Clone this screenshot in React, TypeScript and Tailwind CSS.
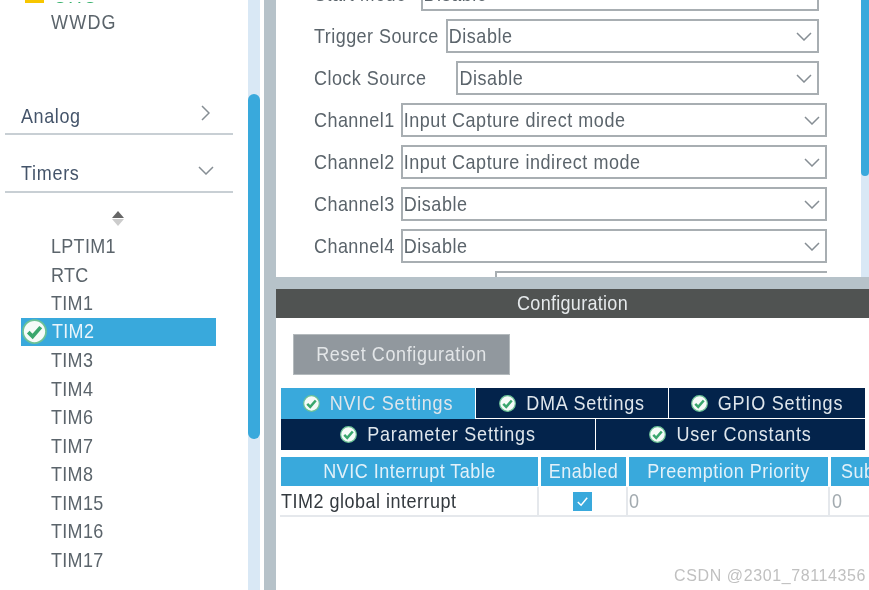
const timers = ["LPTIM1", "RTC", "TIM1", "TIM2", "TIM3", "TIM4", "TIM6", "TIM7", "TIM8", "TIM15", "TIM16", "TIM17"];

// the reference glyphs are a bit taller than Arial at this width
function T({ children }: { children: string }) {
    return <span className="inline-block scale-y-[1.1] whitespace-nowrap">{children}</span>;
}

function CheckDot({ className }: { className: string }) {
    return (
        <svg viewBox="0 0 20 20" className={className}>
            <circle cx="10" cy="10" r="9.2" fill="#f6fbf8" stroke="#6cc296" strokeWidth="1.4" />
            <path d="M5 10.5l3.5 3.5L15 6.5" fill="none" stroke="#3aa76d" strokeWidth="3" />
        </svg>
    );
}

function ArrowDown() {
    return (
        <svg viewBox="0 0 16 9" className="w-[16px] h-[9px]">
            <path d="M1 1l7 7 7-7" fill="none" stroke="#868e94" strokeWidth="1.5" />
        </svg>
    );
}

function ArrowRight() {
    return (
        <svg viewBox="0 0 9 16" className="w-[9px] h-[16px]">
            <path d="M1 1l7 7-7 7" fill="none" stroke="#868e94" strokeWidth="1.5" />
        </svg>
    );
}

function Field({ label, value, boxClass }: { label: string; value: string; boxClass: string }) {
    return (
        <div className="flex h-[34px] mb-2 items-center">
            <span className="tracking-[0.45px] text-[#5b646b]"><T>{label}</T></span>
            <div className={`${boxClass} h-[34px] border-2 border-[#a8aeb2] flex items-center justify-between pl-[1px] pr-[5px] text-[#5b646b] tracking-[0.55px]`}>
                <T>{value}</T>
                <ArrowDown />
            </div>
        </div>
    );
}

function Tab({ label, className }: { label: string; className: string }) {
    return (
        <div className={`flex items-center justify-center gap-[10px] text-[#dfe6ec] tracking-[0.8px] ${className}`}>
            <CheckDot className="w-[17px] h-[17px]" />
            <T>{label}</T>
        </div>
    );
}

export default function App() {
    return (
        <div className="flex w-[869px] h-[590px] overflow-hidden bg-white text-[18px] blur-[0.4px]" style={{ fontFamily: '"Liberation Sans", Arial, sans-serif' }}>
            <aside className="w-[248px] flex flex-col text-[#5b646b]">
                <div className="h-[3px] overflow-hidden flex items-end pl-[25px] gap-[10px]">
                    <div className="w-[19px] h-[3px] bg-[#f7c600] shrink-0" />
                    <span className="text-[#35b06a] tracking-[3px] leading-[18px] translate-y-[15px]">SYS</span>
                </div>
                <div className="pl-[51px] mt-[8px] h-[24px] leading-[22px] tracking-[1.2px]"><T>WWDG</T></div>

                <div className="mt-[64px] mx-[5px] w-[228px] h-[36px] border-b-2 border-[#c8cfd4] flex items-center justify-between pl-[16px] pr-[23px] text-[#44546a] tracking-[0.6px]">
                    <T>Analog</T>
                    <div className="-mt-[6px]"><ArrowRight /></div>
                </div>
                <div className="mt-[20px] mx-[5px] w-[228px] h-[38px] border-b-2 border-[#c8cfd4] flex items-center justify-between pl-[16px] pr-[19px] text-[#44546a] tracking-[0.7px]">
                    <T>Timers</T>
                    <div className="-mt-[6px]"><ArrowDown /></div>
                </div>

                <div className="flex flex-col items-center w-[236px] mt-[18px] h-[18px]">
                    <div className="w-0 h-0 border-x-[6px] border-x-transparent border-b-[7px] border-b-[#666]" />
                    <div className="mt-[1px] w-0 h-0 border-x-[6px] border-x-transparent border-t-[7px] border-t-[#ccc]" />
                </div>

                <ul className="mt-[3px] tracking-[0.3px]">
                    {timers.map((name) =>
                        name === "TIM2" ? (
                            <li key={name} className="ml-[21px] w-[195px] h-[28.55px] bg-[#39a9dc] flex items-center text-[#eaf5fb] pl-[1px]">
                                <CheckDot className="w-[25px] h-[25px]" />
                                <span className="ml-[5px]"><T>{name}</T></span>
                            </li>
                        ) : (
                            <li key={name} className="pl-[51px] h-[28.55px] leading-[28.55px]">
                                <T>{name}</T>
                            </li>
                        )
                    )}
                </ul>
            </aside>

            <div className="w-[12px] bg-[#d9e8f5] pt-[94px]">
                <div className="h-[345px] rounded-full bg-[#39a9dc]" />
            </div>
            <div className="w-[4px]" />
            <div className="w-[12px] bg-[#b6c2c9]" />

            <main className="flex-1 flex flex-col min-w-0">
                <section className="h-[277px] flex overflow-hidden">
                    <div className="flex-1 pl-[38px] -mt-[23px]">
                        <Field label="Start Mode" value="Disable" boxClass="ml-[14px] w-[398px]" />
                        <Field label="Trigger Source" value="Disable" boxClass="ml-[7px] w-[373px]" />
                        <Field label="Clock Source" value="Disable" boxClass="ml-[30px] w-[363px]" />
                        <Field label="Channel1" value="Input Capture direct mode" boxClass="ml-[6px] w-[426px]" />
                        <Field label="Channel2" value="Input Capture indirect mode" boxClass="ml-[6px] w-[426px]" />
                        <Field label="Channel3" value="Disable" boxClass="ml-[6px] w-[426px]" />
                        <Field label="Channel4" value="Disable" boxClass="ml-[6px] w-[426px]" />
                        <div className="ml-[181px] w-[332px] h-[34px] border-t-2 border-l-2 border-[#a8aeb2]" />
                    </div>
                    <div className="w-[8px] bg-[#d9e8f5]">
                        <div className="h-[176px] rounded-b-[4px] bg-[#39a9dc]" />
                    </div>
                </section>

                <div className="h-[12px] bg-[#b6c2c9]" />
                <div className="h-[29px] bg-[#505352] text-[#e6eaec] flex items-center justify-center tracking-[0.3px]"><T>Configuration</T></div>

                <div className="ml-[17px] mt-[16px] w-[217px] h-[41px] bg-[#91989e] border border-[#b4babd] text-[#e3e6e8] tracking-[0.6px] flex items-center justify-center">
                    <T>Reset Configuration</T>
                </div>

                <div className="ml-[5px] mt-[13px] w-[584px] flex items-start gap-[1px] h-[31px]">
                    <Tab label="NVIC Settings" className="w-[194px] h-[31px] bg-[#39a9dc]" />
                    <Tab label="DMA Settings" className="w-[192px] h-[30px] bg-[#03234b]" />
                    <Tab label="GPIO Settings" className="flex-1 h-[30px] bg-[#03234b]" />
                </div>
                <div className="ml-[5px] w-[584px] flex gap-[1px]">
                    <Tab label="Parameter Settings" className="w-[314px] h-[31px] bg-[#03234b]" />
                    <Tab label="User Constants" className="flex-1 h-[31px] bg-[#03234b]" />
                </div>

                <div className="ml-[5px] mt-[7px] flex gap-[3px] h-[29px] text-[#e3f1f9] tracking-[0.5px] whitespace-nowrap">
                    <div className="w-[257px] shrink-0 bg-[#39a9dc] flex items-center justify-center"><T>NVIC Interrupt Table</T></div>
                    <div className="w-[85px] shrink-0 bg-[#39a9dc] flex items-center justify-center"><T>Enabled</T></div>
                    <div className="w-[199px] shrink-0 bg-[#39a9dc] flex items-center justify-center"><T>Preemption Priority</T></div>
                    <div className="flex-1 bg-[#39a9dc] pl-[10px] flex items-center overflow-hidden"><T>Sub</T></div>
                </div>
                <div className="ml-[4px] mt-[1px] h-[30px] flex border-b-2 border-[#e5e8ec]">
                    <div className="w-[259px] shrink-0 border-r-2 border-[#e5e8ec] flex items-center pl-[1px] text-[#33393e] tracking-[0.5px]"><T>TIM2 global interrupt</T></div>
                    <div className="w-[89px] shrink-0 border-r-2 border-[#e5e8ec] flex items-center justify-center">
                        <div className="w-[19px] h-[19px] bg-[#39a9dc] flex items-center justify-center">
                            <svg viewBox="0 0 16 16" className="w-[15px] h-[15px]">
                                <path d="M3 8.5l3.5 3.5L13 4" fill="none" stroke="#fff" strokeWidth="1.6" />
                            </svg>
                        </div>
                    </div>
                    <div className="w-[202px] shrink-0 border-r-2 border-[#e5e8ec] flex items-center pl-[1px] text-[#a3abb0]"><T>0</T></div>
                    <div className="flex-1 flex items-center pl-[2px] text-[#a3abb0]"><T>0</T></div>
                </div>

                <div className="mt-[50px] pr-[3px] text-right text-[16px] leading-[18px] tracking-[0.6px] text-[#c0c0c0] whitespace-nowrap">CSDN @2301_78114356</div>
            </main>
        </div>
    );
}
